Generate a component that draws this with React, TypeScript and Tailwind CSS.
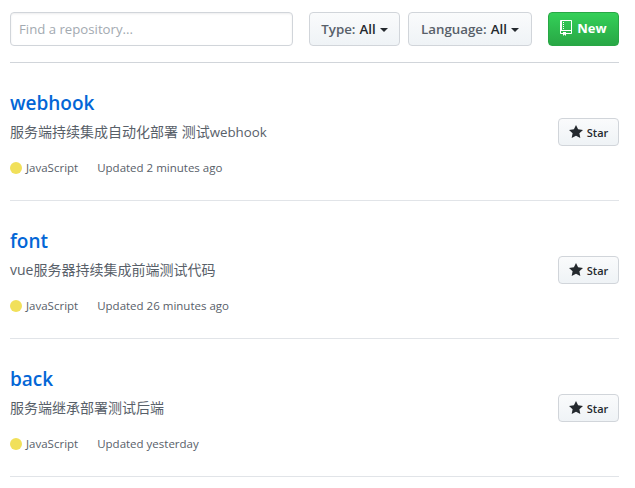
import React from 'react';

const repos = [
  {
    name: 'webhook',
    desc: (
      <>
        服务端持续集成自动化部署 测试<span className="text-[13.3px]">webhook</span>
      </>
    ),
    updated: 'Updated 2 minutes ago',
  },
  { name: 'font', desc: <>vue服务器持续集成前端测试代码</>, updated: 'Updated 26 minutes ago' },
  { name: 'back', desc: <>服务端继承部署测试后端</>, updated: 'Updated yesterday' },
];

const Caret = () => (
  <span className="ml-1 inline-block h-0 w-0 border-x-4 border-t-4 border-x-transparent border-t-[#24292e] align-middle" />
);

const FilterButton = ({ label, width }: { label: string; width: string }) => (
  <button className={`flex h-[34px] ${width} items-center justify-center rounded border border-[#d1d5da] bg-gradient-to-b from-[#fafbfc] to-[#eff3f6] pt-px text-[13.3px] font-semibold text-[#586069]`}>
    {label}: <span className="ml-1 text-[#24292e]">All</span>
    <Caret />
  </button>
);

const Repo = ({ name, desc, updated }: { name: string; desc: React.ReactNode; updated: string }) => (
  <div className="flex h-[138px] border-b border-[#e1e4e8]">
    <div className="flex-1 pt-[26px]">
      <h3 className="text-[19px] leading-[28px] font-semibold text-[#0366d6]">{name}</h3>
      <p className="mt-px text-sm leading-[28px] text-[#586069]">{desc}</p>
      <div className="mt-3 flex items-center text-[11.5px] leading-[20px] text-[#586069]">
        <span className="mr-[4px] -mt-px h-3 w-3 rounded-full bg-[#f1e05a]" />
        <span>JavaScript</span>
        <span className="ml-[19px]">{updated}</span>
      </div>
    </div>
    <div className="pt-[55px]">
      <button className="flex h-7 w-[61px] items-center justify-center gap-1 rounded border border-[#d1d5da] bg-gradient-to-b from-[#fafbfc] to-[#eff3f6] pt-[2px] text-[11px] font-semibold text-[#24292e]">
        <svg width="14" height="16" viewBox="0 0 14 16" fill="#24292e" className="-mt-[2px]">
          <path fillRule="evenodd" d="M14 6l-4.9-.64L7 1 4.9 5.36 0 6l3.6 3.26L2.67 14 7 11.67 11.33 14l-.93-4.74L14 6z" />
        </svg>
        Star
      </button>
    </div>
  </div>
);

export default function App() {
  return (
    <div className="min-h-[488px] bg-white pr-4 pl-[10px] font-['Open_Sans','Noto_Sans_CJK_SC',sans-serif]">
      <div className="flex h-[63px] items-start border-b border-[#d1d5da] pt-3">
        <input
          placeholder="Find a repository..."
          className="h-[34px] w-[283px] rounded border border-[#d1d5da] px-2 text-[13.2px] text-[#24292e] shadow-[inset_0_1px_2px_rgba(27,31,35,0.075)] outline-none placeholder:text-[#a3aab1]"
        />
        <div className="ml-4 flex gap-2">
          <FilterButton label="Type" width="w-[91px]" />
          <FilterButton label="Language" width="w-[124px]" />
        </div>
        <button className="ml-4 flex h-[34px] w-[71px] items-center justify-center gap-[5px] rounded border border-[#28a745] bg-gradient-to-b from-[#34d058] to-[#28a745] text-[13px] font-bold text-white">
          <svg width="12" height="16" viewBox="0 0 12 16" fill="white" className="-mt-0.5">
            <path fillRule="evenodd" d="M4 9H3V8h1v1zm0-3H3v1h1V6zm0-2H3v1h1V4zm0-2H3v1h1V2zm8-1v12c0 .55-.45 1-1 1H6v2l-1.5-1.5L3 16v-2H1c-.55 0-1-.45-1-1V1c0-.55.45-1 1-1h10c.55 0 1 .45 1 1zm-1 10H1v2h2v-1h3v1h5v-2zm0-10H2v9h9V1z" />
          </svg>
          New
        </button>
      </div>
      {repos.map((r) => (
        <Repo key={r.name} {...r} />
      ))}
    </div>
  );
}
